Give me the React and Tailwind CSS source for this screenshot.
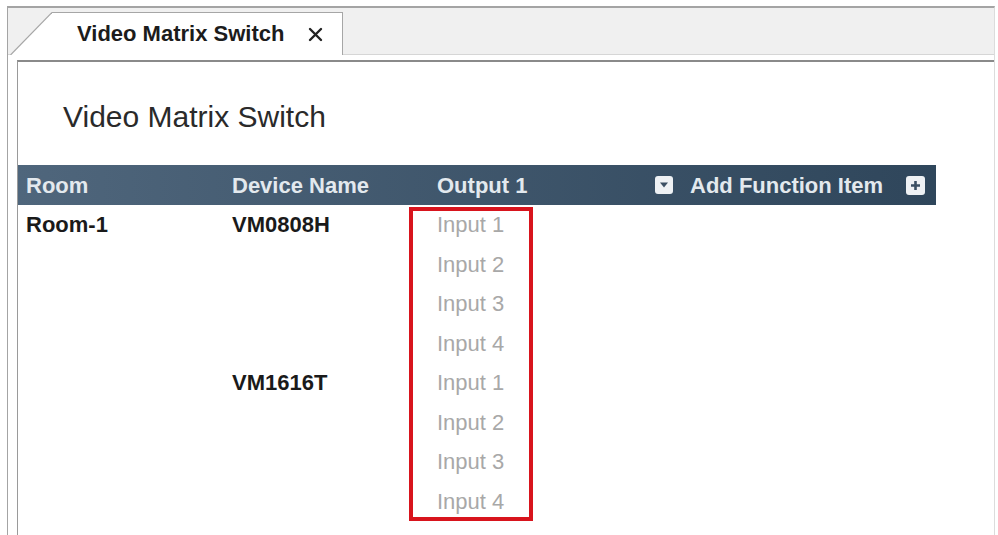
import React from "react";

const rows = [
  ["Room-1", "VM0808H", "Input 1"],
  ["", "", "Input 2"],
  ["", "", "Input 3"],
  ["", "", "Input 4"],
  ["", "VM1616T", "Input 1"],
  ["", "", "Input 2"],
  ["", "", "Input 3"],
  ["", "", "Input 4"],
];

export default function App() {
  return (
    <div
      className="w-[998px] h-[535px] bg-white overflow-hidden"
      style={{ fontFamily: '"Liberation Sans", Arial, sans-serif' }}
    >
      <div className="ml-[7px] mt-[6px] w-[988px] h-[529px] border-t-2 border-l border-r border-[#a4a4a4] border-r-[#dcdcdc] flex flex-col">
        {/* tab strip */}
        <div className="h-[47px] bg-[#f0f0f0] border-b border-[#d6d6d6] flex items-start shrink-0">
          <div className="ml-[2px] mt-[4px] h-[43px] flex relative z-10">
            <svg width="42" height="43" viewBox="0 0 42 43" className="block">
              <polygon points="0,43 42,0 42,43" fill="#ffffff" />
              <line x1="0.5" y1="43" x2="42" y2="0.5" stroke="#a6a6a6" strokeWidth="1.2" />
            </svg>
            <div className="w-[291px] h-[43px] bg-white border-t border-r border-[#a6a6a6] flex items-center pl-[25px]">
              <span className="text-[22px] font-bold text-[#1c1c1c] leading-none">
                Video Matrix Switch
              </span>
              <svg width="15" height="15" viewBox="0 0 15 15" className="ml-[24px]">
                <path d="M2 2 L13 13 M13 2 L2 13" stroke="#222" strokeWidth="2.4" strokeLinecap="round" />
              </svg>
            </div>
          </div>
        </div>
        {/* gap */}
        <div className="h-[5px] shrink-0" />
        {/* content panel */}
        <div className="ml-[9px] flex-1 border-t-2 border-l border-[#8a8a8a] border-l-[#9a9a9a] flex flex-col">
          <div className="pl-[45px] mt-[38px] mb-[31px] h-[34px] text-[30px] leading-[34px] text-[#2a2a2a]">
            Video Matrix Switch
          </div>
          {/* header bar */}
          <div className="w-[918px] h-[40px] bg-linear-to-r from-[#4f667c] to-[#2f465b] flex items-center text-[22px] font-bold text-[#e3e9ee] shrink-0">
            <div className="w-[214px] pl-[8px]">Room</div>
            <div className="w-[205px]">Device Name</div>
            <div className="w-[218px]">Output 1</div>
            <div className="w-[18px] h-[18px] rounded-[3px] bg-[#eef1f4] flex items-center justify-center">
              <svg width="10" height="6" viewBox="0 0 10 6">
                <polygon points="1,0.5 9,0.5 5,5.5" fill="#3b4f63" />
              </svg>
            </div>
            <div className="ml-[17px]">Add Function Item</div>
            <div className="ml-[23px] w-[19px] h-[19px] rounded-[3px] bg-[#eef1f4] flex items-center justify-center">
              <svg width="11" height="11" viewBox="0 0 11 11">
                <path d="M5.5 1 V10 M1 5.5 H10" stroke="#3b4f63" strokeWidth="2.6" />
              </svg>
            </div>
          </div>
          {/* body */}
          <div className="relative w-[918px]">
            {rows.map((r, i) => (
              <div key={i} className="h-[39.5px] flex items-center text-[22px]">
                <div className="w-[214px] pl-[8px] font-bold text-[#1a1a1a]">{r[0]}</div>
                <div className="w-[205px] font-bold text-[#1a1a1a]">{r[1]}</div>
                <div className="w-[218px] text-[#a8a8a8]">{r[2]}</div>
              </div>
            ))}
            <div className="absolute left-[391px] top-[2px] w-[124px] h-[314px] border-4 border-[#d8141d]" />
          </div>
        </div>
      </div>
    </div>
  );
}
